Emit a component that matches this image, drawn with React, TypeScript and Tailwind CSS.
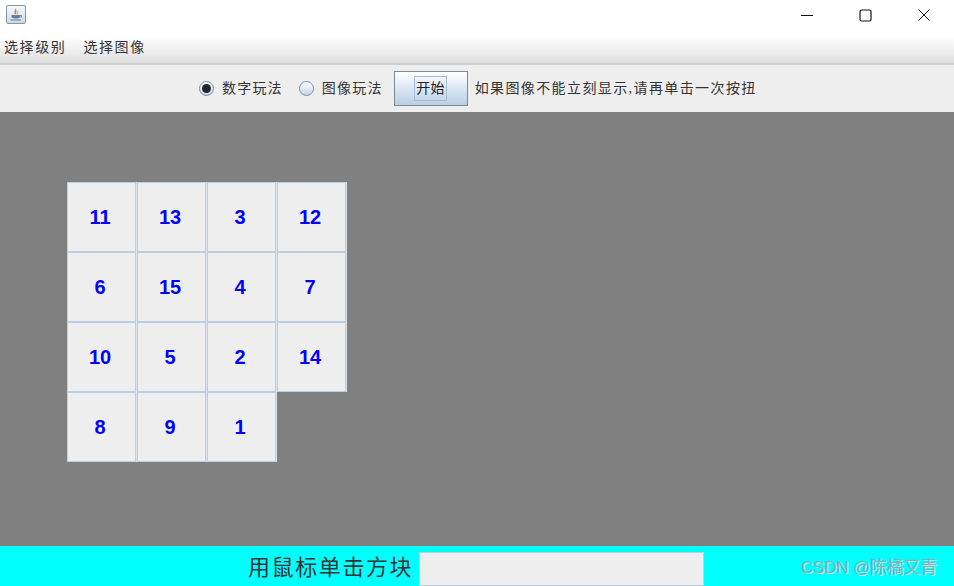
import React from 'react';

const cjk = "font-['Liberation_Serif','Noto_Sans_CJK_SC',serif]";
const tiles = [11, 13, 3, 12, 6, 15, 4, 7, 10, 5, 2, 14, 8, 9, 1, 0];

const JavaIcon = () => (
  <div className="w-[20px] h-[19px] rounded-[2px] border border-[#8496a8] bg-gradient-to-b from-[#f8f9fb] to-[#cdd9e5] flex items-center justify-center">
    <svg width="16" height="15" viewBox="0 0 16 15" fill="none">
      <path d="M8.5 0.5 C7 3 10 4 7.5 7.5 C6 6 6 3.5 8.5 0.5Z" fill="#e8762b" />
      <path d="M10 3.5 C9 5 10.5 5.5 9 7.5" stroke="#eda556" strokeWidth="1" />
      <path d="M3.5 8 H12 V9.5 C12 11 10.5 11.5 8 11.5 C5.5 11.5 3.5 11 3.5 9.5Z" fill="#5f7f9c" />
      <path d="M12 8.5 H13.5 V10 H12" stroke="#5f7f9c" strokeWidth="0.8" />
      <path d="M2.5 13 H13" stroke="#5f7f9c" strokeWidth="1" />
    </svg>
  </div>
);

const Radio = ({ checked }: { checked?: boolean }) => (
  <div className="w-[15px] h-[15px] rounded-full border border-[#7d8fa3] bg-gradient-to-b from-[#ffffff] to-[#c5d5e6] flex items-center justify-center">
    {checked && <div className="w-[9px] h-[9px] rounded-full bg-[#23272c]" />}
  </div>
);

export default function App() {
  return (
    <div className={`w-[954px] h-[586px] flex flex-col overflow-hidden bg-white ${cjk}`}>
      <div className="h-[37px] shrink-0 bg-white flex items-start justify-between">
        <div className="pl-[6px] pt-[5px]">
          <JavaIcon />
        </div>
        <div className="flex items-center pt-[8px] pr-[23px] gap-[45px]">
          <svg width="14" height="12" viewBox="0 0 14 12" fill="none">
            <path d="M1 6.5 H13" stroke="#111" strokeWidth="1" />
          </svg>
          <svg width="13" height="13" viewBox="0 0 13 13" fill="none">
            <rect x="1" y="1" width="11" height="11" rx="1.5" stroke="#111" strokeWidth="1.2" />
          </svg>
          <svg width="14" height="14" viewBox="0 0 14 14" fill="none">
            <path d="M1.5 1.5 L12.5 12.5 M12.5 1.5 L1.5 12.5" stroke="#111" strokeWidth="1" />
          </svg>
        </div>
      </div>

      <div className="h-[26px] shrink-0 bg-gradient-to-b from-[#ffffff] to-[#dedede] flex items-center gap-[17px] pl-[4px] pb-[6px] text-[14px] tracking-[1.6px] text-[#333333]">
        <span>选择级别</span>
        <span>选择图像</span>
      </div>
      <div className="h-[2px] shrink-0 bg-[#cfcfcf]" />

      <div className="h-[47px] shrink-0 bg-[#eeeeee] flex items-center pl-[199px] text-[14px] text-[#333333]">
        <Radio checked />
        <span className="ml-[8px] tracking-[1.2px]">数字玩法</span>
        <div className="ml-[16px]"><Radio /></div>
        <span className="ml-[8px] tracking-[1.2px]">图像玩法</span>
        <div className="ml-[11px] w-[74px] h-[35px] border border-[#7a8a99] bg-gradient-to-b from-[#ffffff] to-[#b8cfe5] flex items-center justify-center">
          <span className="w-[33px] h-[25px] border border-[#a3bdd6] flex items-center justify-center text-[#222222] tracking-[0.5px]">开始</span>
        </div>
        <span className="ml-[7px] tracking-[1.4px]">如果图像不能立刻显示,请再单击一次按扭</span>
      </div>

      <div className="flex-1 bg-[#808080] pl-[67px] pt-[70px]">
        <div className="grid grid-cols-[repeat(4,70px)] auto-rows-[70px] w-[280px]">
          {tiles.map((n, i) =>
            n === 0 ? (
              <div key={i} />
            ) : (
              <div
                key={i}
                className="w-[69px] bg-[#eeeeee] border border-[#b8cfe5] shadow-[1px_0_0_#dbe4ec] pr-[3px] flex items-center justify-center font-['Liberation_Sans',sans-serif] font-bold text-[20px] text-[#0000ff]"
              >
                {n}
              </div>
            )
          )}
        </div>
      </div>

      <div className="h-[40px] shrink-0 bg-[#00ffff] flex items-center relative pl-[248px]">
        <span className="text-[22px] leading-none tracking-[1.6px] text-[#333333] pt-[4px]">用鼠标单击方块</span>
        <div className="ml-[6px] mt-[6px] w-[285px] h-[34px] bg-[#eeeeee] border border-[#b8cfe5]" />
        <span className="absolute left-[801px] top-[11px] text-[17px] leading-[22px] tracking-[-0.2px] text-[#7db2ba] [text-shadow:1px_1px_0_#a8eef2] font-['Liberation_Sans','Noto_Sans_CJK_SC',sans-serif]">
          CSDN @陈橘又青
        </span>
      </div>
    </div>
  );
}
